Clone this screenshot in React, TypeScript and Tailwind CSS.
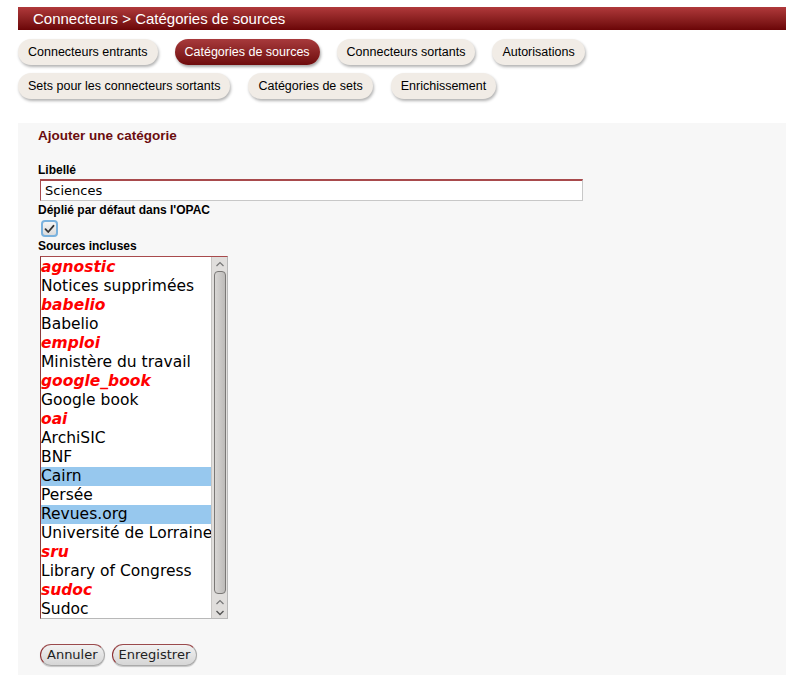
import React from "react";

const tabsRow1 = [
  { label: "Connecteurs entrants" },
  { label: "Catégories de sources", active: true },
  { label: "Connecteurs sortants" },
  { label: "Autorisations" },
];
const tabsRow2 = [
  { label: "Sets pour les connecteurs sortants" },
  { label: "Catégories de sets" },
  { label: "Enrichissement" },
];

const sources: { label: string; group?: boolean; selected?: boolean }[] = [
  { label: "agnostic", group: true },
  { label: "Notices supprimées" },
  { label: "babelio", group: true },
  { label: "Babelio" },
  { label: "emploi", group: true },
  { label: "Ministère du travail" },
  { label: "google_book", group: true },
  { label: "Google book" },
  { label: "oai", group: true },
  { label: "ArchiSIC" },
  { label: "BNF" },
  { label: "Cairn", selected: true },
  { label: "Persée" },
  { label: "Revues.org", selected: true },
  { label: "Université de Lorraine" },
  { label: "sru", group: true },
  { label: "Library of Congress" },
  { label: "sudoc", group: true },
  { label: "Sudoc" },
];

const Tab = ({ label, active }: { label: string; active?: boolean }) => (
  <button
    className={
      active
        ? "h-[26px] px-[10px] rounded-full text-[12.5px] text-white bg-gradient-to-b from-[#a83a3c] to-[#6e0a0c] shadow-[1px_2px_3px_rgba(0,0,0,0.35)]"
        : "h-[26px] px-[10px] rounded-full text-[12.5px] text-black bg-[#f1ece6] shadow-[1px_2px_3px_rgba(0,0,0,0.3)]"
    }
  >
    {label}
  </button>
);

const App: React.FC = () => {
  return (
    <div className="min-h-screen bg-white pt-[7px] px-[18px] font-['Liberation_Sans',Arial,sans-serif] text-black">
      <div className="h-[23px] bg-gradient-to-b from-[#b0393b] to-[#6b0507] text-white text-[15px] leading-[23px] pl-[15px]">
        Connecteurs &gt; Catégories de sources
      </div>

      {/* onglets */}
      <div className="flex gap-[17px] mt-[9px]">
        {tabsRow1.map((t) => (
          <Tab key={t.label} {...t} />
        ))}
      </div>
      <div className="flex gap-[18px] mt-[8px]">
        {tabsRow2.map((t) => (
          <Tab key={t.label} {...t} />
        ))}
      </div>

      <div className="mt-[24px] bg-[#f7f7f7] pl-[20px] pt-[5px] pb-[9px]">
        <h2 className="text-[13.5px] font-bold text-[#6b0d0f] leading-[16px]">Ajouter une catégorie</h2>

        <label className="block mt-[19px] text-[12px] font-bold leading-[14px]">Libellé</label>
        <input
          defaultValue="Sciences"
          className="block mt-[2px] ml-[2px] w-[543px] h-[22px] bg-white border border-[#c8c8c8] border-t-2 border-t-[#a84a4c] border-l-[#a84a4c] px-[4px] text-[13px] font-['DejaVu_Sans',Verdana,sans-serif] outline-none"
        />

        <div className="mt-[2px] text-[12px] font-bold leading-[14px]">Déplié par défaut dans l'OPAC</div>
        <div className="mt-[3px] ml-[3px] w-[17px] h-[17px] rounded-[4px] border-2 border-[#7ab2de] bg-gradient-to-b from-[#f4f4f4] to-[#dcdcdc] flex items-center justify-center">
          <svg width="11" height="10" viewBox="0 0 11 10">
            <path d="M1.5 5.2 L4.2 8 L9.5 1.8" fill="none" stroke="#333" strokeWidth="1.8" strokeLinecap="round" strokeLinejoin="round" />
          </svg>
        </div>

        <div className="mt-[2px] text-[12px] font-bold leading-[14px]">Sources incluses</div>
        <div className="mt-[3px] ml-[2px] w-[188px] h-[363px] flex bg-white border border-[#b8b8b8] border-t-[#a84a4c] border-l-[#8a3a3c] font-['DejaVu_Sans',Verdana,sans-serif]">
          <div className="flex-1 overflow-hidden pt-[1px]">
            {sources.map((s) => (
              <div
                key={s.label}
                className={
                  "h-[19px] leading-[19px] whitespace-nowrap text-[15.5px] " +
                  (s.group ? "text-[#f00] font-bold italic " : "") +
                  (s.selected ? "bg-[#97c8ee]" : "")
                }
              >
                {s.label}
              </div>
            ))}
          </div>
          {/* barre de défilement */}
          <div className="w-[16px] bg-[#e0dedc] border-l border-[#c8c6c4] flex flex-col items-center">
            <svg width="12" height="12" viewBox="0 0 12 12" className="mt-[1px]">
              <path d="M2.5 8 L6 4.5 L9.5 8" fill="none" stroke="#777" strokeWidth="1.2" />
            </svg>
            <div className="w-[12px] h-[323px] mt-[1px] rounded-[4px] border border-[#7a7876] bg-gradient-to-r from-[#d8d6d4] to-[#bdbbb9]" />
            <svg width="12" height="12" viewBox="0 0 12 12" className="mt-[2px]">
              <path d="M2.5 8 L6 4.5 L9.5 8" fill="none" stroke="#777" strokeWidth="1.2" />
            </svg>
            <svg width="12" height="10" viewBox="0 0 12 10">
              <path d="M2.5 3 L6 6.5 L9.5 3" fill="none" stroke="#555" strokeWidth="1.4" />
            </svg>
          </div>
        </div>

        <div className="flex gap-[7px] mt-[25px] ml-[2px] font-['DejaVu_Sans',Verdana,sans-serif]">
          <button className="h-[22px] px-[6px] rounded-full text-[13px] text-[#222] bg-gradient-to-b from-[#f2f2f2] to-[#d6d6d6] border border-[#aaa] border-l-[#8a2a2c] border-t-[#9a4a4c] shadow-[0_1px_1px_rgba(0,0,0,0.2)]">
            Annuler
          </button>
          <button className="h-[22px] px-[6px] rounded-full text-[13px] text-[#222] bg-gradient-to-b from-[#f2f2f2] to-[#d6d6d6] border border-[#aaa] border-l-[#8a2a2c] border-t-[#9a4a4c] shadow-[0_1px_1px_rgba(0,0,0,0.2)]">
            Enregistrer
          </button>
        </div>
      </div>
    </div>
  );
};

export default App;
